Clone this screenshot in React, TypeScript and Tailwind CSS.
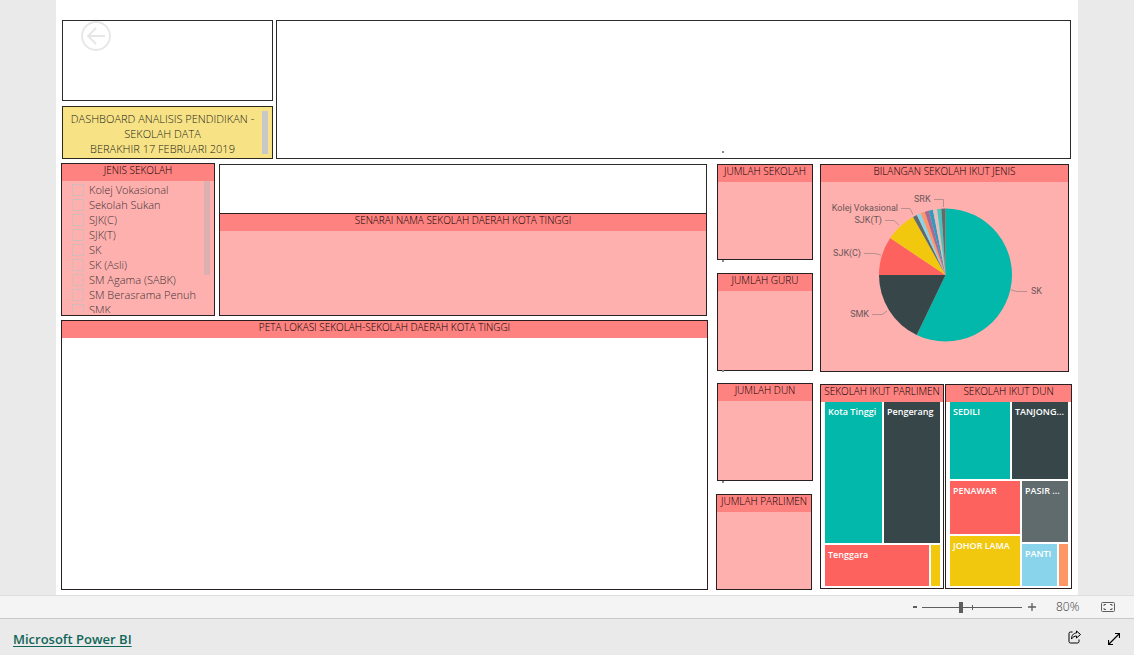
import { useState, type ReactNode } from "react";
import clsx from "clsx";

const schoolTypes = [
  "Kolej Vokasional",
  "Sekolah Sukan",
  "SJK(C)",
  "SJK(T)",
  "SK",
  "SK (Asli)",
  "SM Agama (SABK)",
  "SM Berasrama Penuh",
  "SMK",
];

// Slice ends in degrees, clockwise from the top
const slices = [
  { name: "SK", end: 205.7, color: "#01B8AA" },
  { name: "SMK", end: 270, color: "#374649" },
  { name: "SJK(C)", end: 303.7, color: "#FD625E" },
  { name: "SJK(T)", end: 330.8, color: "#F2C80F" },
  { name: "Kolej Vokasional", end: 334.5, color: "#5F6B6D" },
  { name: "SM Agama (SABK)", end: 338.1, color: "#8AD4EB" },
  { name: "SM Berasrama Penuh", end: 341.8, color: "#FE9666" },
  { name: "Sekolah Sukan", end: 345.4, color: "#A66999" },
  { name: "SK (Asli)", end: 349.1, color: "#3599B8" },
  { name: "SMKA", end: 352.7, color: "#DFBFBF" },
  { name: "SMT", end: 356.4, color: "#4AC5BB" },
  { name: "SRK", end: 360, color: "#5F6B6D" },
];

const CX = 124.5;
const CY = 93;
const R = 66.5;

function point(deg: number) {
  const rad = (deg * Math.PI) / 180;
  return `${(CX + R * Math.sin(rad)).toFixed(2)} ${(CY - R * Math.cos(rad)).toFixed(2)}`;
}

function slicePath(start: number, end: number) {
  const large = end - start > 180 ? 1 : 0;
  return `M${CX} ${CY}L${point(start)}A${R} ${R} 0 ${large} 1 ${point(end)}Z`;
}

function Panel({
  title,
  className,
  children,
}: {
  title: string;
  className?: string;
  children?: ReactNode;
}) {
  return (
    <section className={clsx("flex min-w-0 flex-col border border-[#2a2022]", className)}>
      <h2 className="h-[17px] shrink-0 overflow-hidden whitespace-nowrap bg-[#fe827f] text-center text-[10px] font-light leading-[13px] text-black">
        {title}
      </h2>
      {children}
    </section>
  );
}

function Card({ title, className }: { title: string; className?: string }) {
  return <Panel title={title} className={clsx("bg-[#feb0af]", className)} />;
}

function Dot({ className }: { className?: string }) {
  return <span className={clsx("absolute h-0.5 w-0.5 bg-[#8a8a8a]", className)} />;
}

function Tile({ label, className }: { label?: string; className: string }) {
  return (
    <div
      className={clsx(
        "min-w-0 whitespace-nowrap pl-[3px] pt-0.5 text-[9px] font-semibold leading-4 text-white",
        className
      )}
    >
      {label}
    </div>
  );
}

function PieChart() {
  return (
    <svg viewBox="0 0 247 189" className="h-[189px] w-full" role="img" aria-label="Bilangan sekolah ikut jenis">
      {slices.map((s, i) => (
        <path key={s.name} d={slicePath(i === 0 ? 0 : slices[i - 1].end, s.end)} fill={s.color} />
      ))}
      <g fill="none" stroke="#b98f8e" strokeWidth="1">
        <path d="M113 17.500h9.500V25" />
        <path d="M80 26.500h9l3 6" />
        <path d="M64 38.500h9l5 4.500" />
        <path d="M43 71.500h11l6 1.500" />
        <path d="M51 132.500h10l5-3.500" />
        <path d="M190 108l6 1.500h10" />
      </g>
      <g className="fill-[#6b5657] font-[Roboto,sans-serif] text-[9px]">
        <text x="93" y="20">SRK</text>
        <text x="77" y="29" textAnchor="end">Kolej Vokasional</text>
        <text x="61" y="41" textAnchor="end">SJK(T)</text>
        <text x="40" y="74" textAnchor="end">SJK(C)</text>
        <text x="48" y="135" textAnchor="end">SMK</text>
        <text x="210" y="112">SK</text>
      </g>
    </svg>
  );
}

export default function App() {
  const [zoom, setZoom] = useState(39);

  return (
    <div className="flex min-h-screen flex-col bg-[#eaeaea] font-['Open_Sans','Noto_Sans',sans-serif]">
      {/* Report canvas */}
      <main className="flex flex-1 px-14">
        <div className="flex min-w-0 flex-1 flex-col gap-1 bg-white pb-[5px] pl-[5px] pr-1.5 pt-5">
          <div className="relative flex h-[139px] gap-[3px] px-px">
            <div className="flex w-[211px] shrink-0 flex-col gap-[5px]">
              <div className="h-[81px] border border-[#2b2b2b] pl-[18px]">
                <button type="button" aria-label="Kembali" className="block text-[#e6e6e6]">
                  <svg width="30" height="30" viewBox="0 0 30 30" fill="none" stroke="currentColor" strokeWidth="1.8">
                    <circle cx="15" cy="15" r="14" />
                    <path d="M24 15H7M15 7l-8 8 8 8" />
                  </svg>
                </button>
              </div>
              <div className="flex flex-1 border border-[#2d2918] bg-[#f7e386] pr-1">
                <h1 className="flex-1 whitespace-nowrap pt-1 text-center text-[11px] font-light leading-[15px] text-[#1f1d16]">
                  DASHBOARD ANALISIS PENDIDIKAN -<br />
                  SEKOLAH DATA
                  <br />
                  BERAKHIR 17 FEBRUARI 2019
                </h1>
                <div className="my-1 w-1.5 bg-[#c8c8c8]" />
              </div>
            </div>
            <div className="relative flex-1 border border-[#2b2b2b]">
              <Dot className="bottom-[5px] left-[445px]" />
            </div>
          </div>

          <div className="flex h-[427px]">
            <div className="flex min-w-0 flex-1 flex-col gap-1">
              <div className="flex h-[153px] gap-1 pr-px">
                <Panel title="JENIS SEKOLAH" className="w-[154px] shrink-0 bg-[#feb0af]">
                  <div className="flex h-[132px] justify-between overflow-hidden pr-1">
                    <ul className="pl-2.5 pt-px">
                      {schoolTypes.map((type) => (
                        <li key={type}>
                          <label className="flex h-[15px] items-center gap-[5px] whitespace-nowrap text-[11px] font-light leading-[15px] text-[#3f3334]">
                            <input
                              type="checkbox"
                              className="h-3 w-3 shrink-0 appearance-none border border-[#d3bbb9] checked:bg-[#756061]"
                            />
                            {type}
                          </label>
                        </li>
                      ))}
                    </ul>
                    <div className="h-[94px] w-1.5 shrink-0 bg-[#dbb0ae]" />
                  </div>
                </Panel>
                <div className="flex min-w-0 flex-1 flex-col pt-px">
                  <div className="h-[49px] border border-b-0 border-[#2b2b2b]" />
                  <Panel title="SENARAI NAMA SEKOLAH DAERAH KOTA TINGGI" className="flex-1 bg-[#feb0af]" />
                </div>
              </div>
              <Panel title="PETA LOKASI SEKOLAH-SEKOLAH DAERAH KOTA TINGGI" className="flex-1 bg-white" />
            </div>

            <div className="relative ml-2 flex w-[97px] shrink-0 flex-col justify-between pt-px">
              <Card title="JUMLAH SEKOLAH" className="ml-px h-24" />
              <Card title="JUMLAH GURU" className="ml-px h-[98px]" />
              <Card title="JUMLAH DUN" className="ml-px h-[98px]" />
              <Card title="JUMLAH PARLIMEN" className="mr-px h-24" />
              <Dot className="left-1.5 top-[97px]" />
              <Dot className="left-1.5 top-[207px]" />
              <Dot className="left-1.5 top-[318px]" />
            </div>

            <div className="ml-[7px] flex w-[252px] shrink-0 flex-col gap-3 pt-px">
              <Panel title="BILANGAN SEKOLAH IKUT JENIS" className="mr-[3px] h-[208px] bg-[#feb0af]">
                <PieChart />
              </Panel>
              <div className="flex h-[205px] gap-px">
                <Panel title="SEKOLAH IKUT PARLIMEN" className="w-[124px] bg-white">
                  <div className="flex flex-1 flex-col gap-0.5 pb-0.5 pl-1 pr-[3px]">
                    <div className="flex flex-1 gap-0.5">
                      <Tile label="Kota Tinggi" className="w-[57px] bg-[#01b8aa]" />
                      <Tile label="Pengerang" className="flex-1 bg-[#374649]" />
                    </div>
                    <div className="flex h-[41px] gap-0.5">
                      <Tile label="Tenggara" className="flex-1 bg-[#fd625e]" />
                      <Tile className="w-[9px] bg-[#f2c80f]" />
                    </div>
                  </div>
                </Panel>
                <Panel title="SEKOLAH IKUT DUN" className="flex-1 bg-white">
                  <div className="flex flex-1 flex-col gap-0.5 pb-0.5 pl-1 pr-[3px]">
                    <div className="flex h-[77px] gap-0.5">
                      <Tile label="SEDILI" className="flex-1 bg-[#01b8aa]" />
                      <Tile label="TANJONG..." className="w-14 bg-[#374649]" />
                    </div>
                    <div className="flex flex-1 gap-0.5">
                      <div className="flex min-w-0 flex-1 flex-col gap-0.5">
                        <Tile label="PENAWAR" className="flex-1 bg-[#fd625e]" />
                        <Tile label="JOHOR LAMA" className="h-[50px] bg-[#f2c80f]" />
                      </div>
                      <div className="flex w-[46px] flex-col gap-0.5">
                        <Tile label="PASIR ..." className="flex-1 bg-[#5f6b6d]" />
                        <div className="flex h-[42px] gap-0.5">
                          <Tile label="PANTI" className="flex-1 bg-[#8ad4eb]" />
                          <Tile className="w-[9px] bg-[#fe9666]" />
                        </div>
                      </div>
                    </div>
                  </div>
                </Panel>
              </div>
            </div>
          </div>
        </div>
      </main>

      {/* Zoom bar */}
      <div className="flex h-6 items-center justify-end border-b border-t border-b-[#c8c8c8] border-t-[#dedede] bg-[#f4f4f4] pr-[19px] text-[#605e5c]">
        <button type="button" aria-label="Zum keluar" onClick={() => setZoom(Math.max(0, zoom - 5))}>
          <svg width="6" height="12" viewBox="0 0 6 12" stroke="currentColor" strokeWidth="2">
            <path d="M1 6h4" />
          </svg>
        </button>
        <div className="relative ml-1 flex w-[100px] items-center">
          <input
            type="range"
            aria-label="Zum"
            min={0}
            max={100}
            value={zoom}
            onChange={(e) => setZoom(Number(e.target.value))}
            className="h-3 w-full appearance-none bg-transparent [&::-webkit-slider-runnable-track]:h-px [&::-webkit-slider-runnable-track]:bg-[#605e5c] [&::-webkit-slider-thumb]:-mt-[5px] [&::-webkit-slider-thumb]:h-[11px] [&::-webkit-slider-thumb]:w-1 [&::-webkit-slider-thumb]:appearance-none [&::-webkit-slider-thumb]:bg-[#605e5c]"
          />
          <span className="absolute left-[50px] h-[5px] w-px bg-[#605e5c]" />
        </div>
        <button type="button" aria-label="Zum masuk" className="ml-1.5" onClick={() => setZoom(Math.min(100, zoom + 5))}>
          <svg width="8" height="12" viewBox="0 0 8 12" stroke="currentColor" strokeWidth="1.3">
            <path d="M0 6h8M4 2v8" />
          </svg>
        </button>
        <span className="ml-5 w-[23px] whitespace-nowrap text-[12px] font-light text-[#3b3a39]">80%</span>
        <button type="button" aria-label="Muat pada halaman" className="ml-[22px]">
          <svg width="14" height="10" viewBox="0 0 14 10" fill="none" stroke="currentColor">
            <rect x="0.5" y="0.5" width="13" height="9" rx="1" />
            <path d="M3 4V2.500h2M9 2.500h2V4M11 6v1.500H9M5 7.500H3V6" />
          </svg>
        </button>
      </div>

      {/* Footer */}
      <footer className="flex h-9 items-center pb-px pl-[13px] pr-3.5">
        <a
          href="https://powerbi.microsoft.com"
          className="mt-1 text-[13px] font-semibold leading-5 text-[#106658] underline underline-offset-2"
        >
          Microsoft Power BI
        </a>
        <div className="ml-auto flex gap-[26px] text-black">
          <button type="button" aria-label="Kongsi">
            <svg width="14" height="14" viewBox="0 0 14 14" fill="none" stroke="currentColor">
              <path d="M4.500 2H2.500a1.500 1.500 0 0 0-1.500 1.500v8A1.500 1.500 0 0 0 2.500 13h7a1.500 1.500 0 0 0 1.500-1.500V9.500" />
              <path d="M8.500 1l4 3.500-4 3.500V6C6.500 6 5 6.800 3.500 9c0-3.500 2-6 5-6z" />
            </svg>
          </button>
          <button type="button" aria-label="Skrin penuh" className="pt-1">
            <svg width="12" height="12" viewBox="0 0 12 12" fill="none" stroke="currentColor" strokeWidth="1.2">
              <path d="M7 .5h4.500V5M.5 7v4.500H5M.5 11.500l11-11" />
            </svg>
          </button>
        </div>
      </footer>
    </div>
  );
}
